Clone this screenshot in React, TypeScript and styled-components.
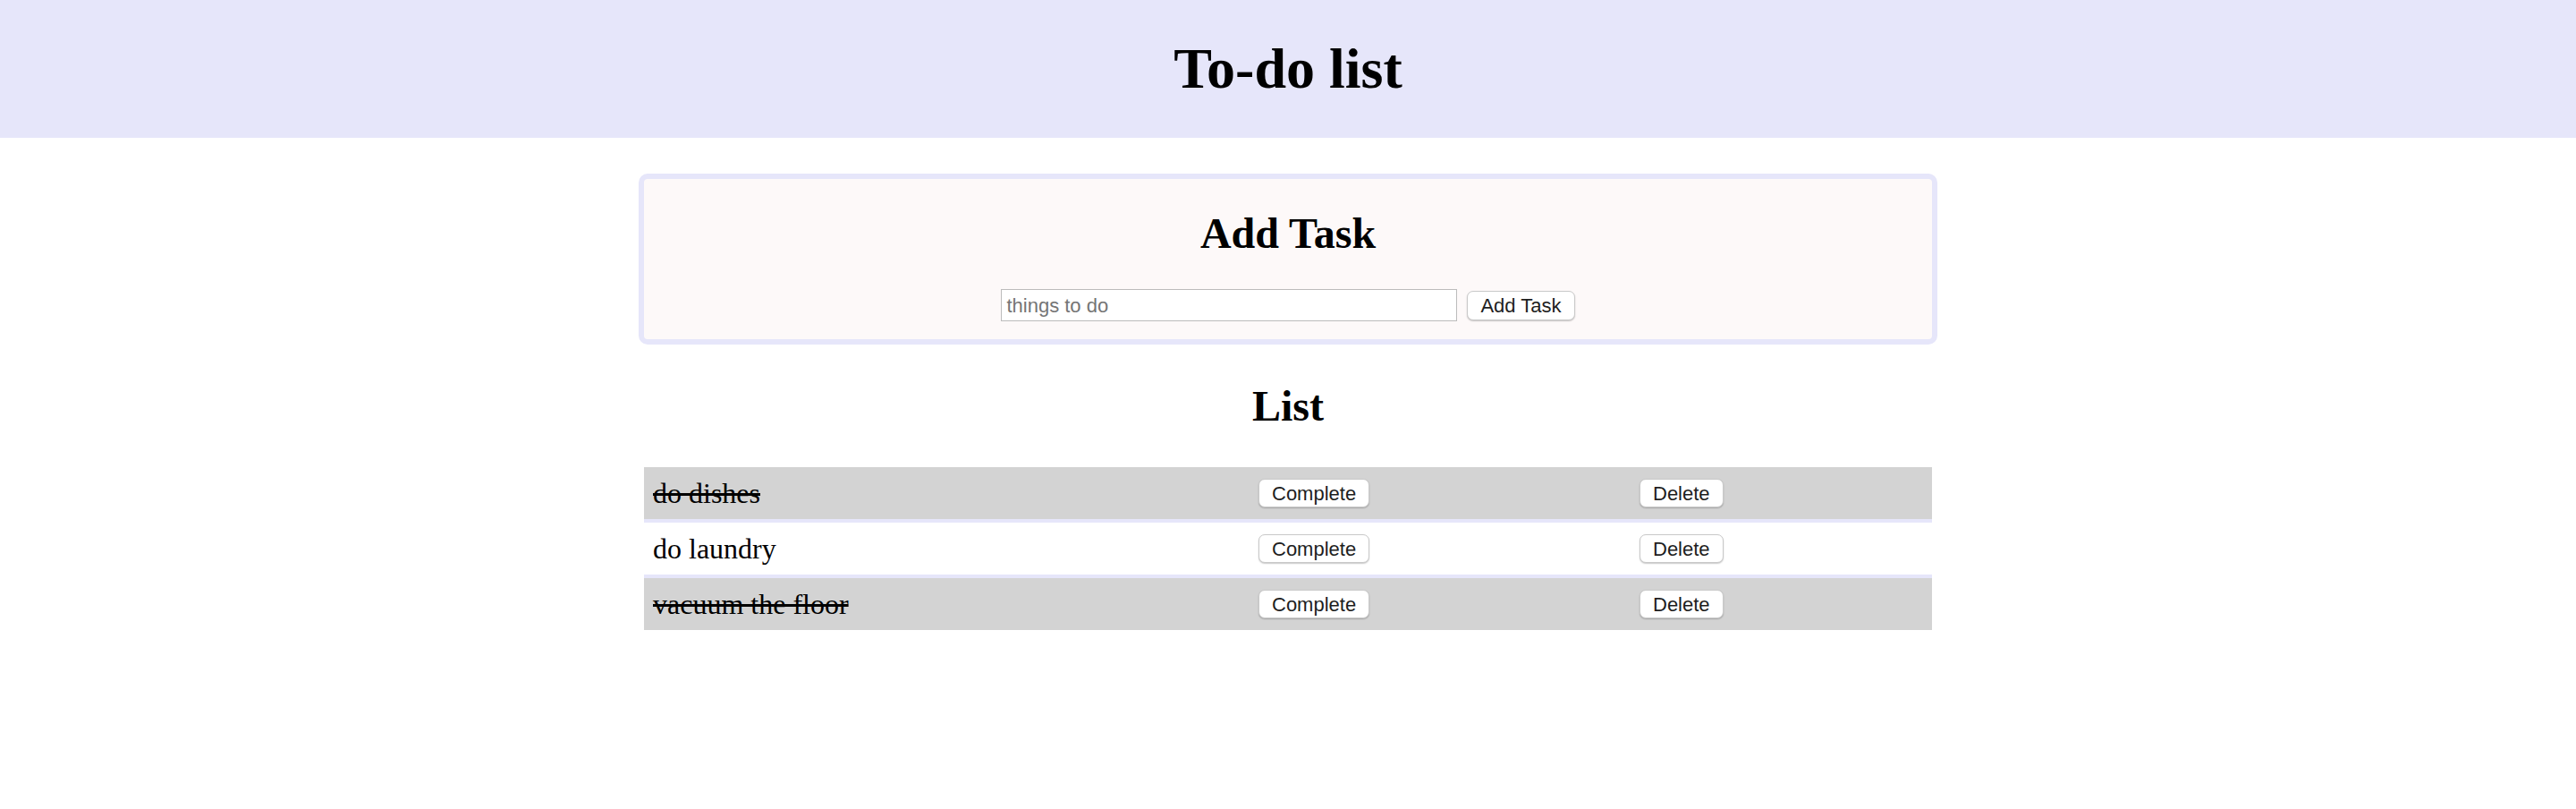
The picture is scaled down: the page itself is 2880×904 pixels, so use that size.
import React from "react";
import styled, { createGlobalStyle } from "styled-components";

const GlobalStyle = createGlobalStyle`
  html, body {
    margin: 0;
    padding: 0;
    background: #ffffff;
    font-family: "Liberation Serif", "Times New Roman", serif;
    color: #000;
  }
`;

const Header = styled.header`
  height: 154px;
  background: #e6e6fa;
  display: flex;
  align-items: center;
  justify-content: center;
`;

const Title = styled.h1`
  margin: 0;
  font-size: 64px;
  line-height: 74px;
  font-weight: 700;
`;

const Main = styled.main`
  display: flex;
  flex-direction: column;
  align-items: center;
  padding-top: 40px;
`;

const AddBox = styled.section`
  box-sizing: content-box;
  width: 1440px;
  border: 6px solid #e6e6fa;
  border-radius: 10px;
  background: #fdf9f9;
  display: flex;
  flex-direction: column;
  align-items: center;
  padding: 33px 0 20px;
`;

const SectionTitle = styled.h2<{ $space?: number }>`
  margin: ${(p) => (p.$space ? `${p.$space}px 0` : "0")};
  font-size: 48px;
  line-height: 55px;
  font-weight: 700;
`;

const Form = styled.form`
  display: flex;
  align-items: center;
  gap: 11px;
  margin-top: 35px;
`;

const TaskInput = styled.input`
  box-sizing: border-box;
  width: 510px;
  height: 36px;
  border: 1px solid #bcbcbc;
  border-radius: 0;
  padding: 2px 5px 0;
  background: #fff;
  font-family: "Liberation Sans", Arial, sans-serif;
  font-size: 22px;
  color: #000;
  outline: none;
  &::placeholder {
    color: #757575;
  }
`;

const Button = styled.button<{ $h?: number }>`
  box-sizing: border-box;
  height: ${(p) => p.$h ?? 32}px;
  padding: 2px 14px 0;
  border: 1px solid #c9c9c9;
  border-radius: 7px;
  background: #ffffff;
  box-shadow: 0 1px 1.5px rgba(0, 0, 0, 0.22);
  font-family: "Liberation Sans", Arial, sans-serif;
  font-size: 22px;
  color: #1e1e1e;
  cursor: pointer;
`;

const TaskList = styled.div`
  width: 1440px;
  display: flex;
  flex-direction: column;
`;

const TaskRow = styled.div<{ $done: boolean }>`
  display: grid;
  grid-template-columns: 677px 426px 1fr;
  height: 58px;
  background: ${(p) => (p.$done ? "#d3d3d3" : "#ffffff")};
  & + & {
    border-top: 4px solid #e6e6fa;
  }
`;

const Cell = styled.div`
  display: flex;
  align-items: center;
  padding: 0 10px;
`;

const TaskText = styled.span<{ $done: boolean }>`
  font-size: 32px;
  line-height: 37px;
  text-decoration: ${(p) => (p.$done ? "line-through" : "none")};
`;

const tasks = [
  { id: 1, text: "do dishes", done: true },
  { id: 2, text: "do laundry", done: false },
  { id: 3, text: "vacuum the floor", done: true },
];

export default function App() {
  return (
    <>
      <GlobalStyle />
      <Header>
        <Title>To-do list</Title>
      </Header>
      <Main>
        <AddBox>
          <SectionTitle>Add Task</SectionTitle>
          <Form onSubmit={(e) => e.preventDefault()}>
            <TaskInput placeholder="things to do" />
            <Button $h={33} type="submit">
              Add Task
            </Button>
          </Form>
        </AddBox>
        <SectionTitle $space={41}>List</SectionTitle>
        <TaskList>
          {tasks.map((t) => (
            <TaskRow key={t.id} $done={t.done}>
              <Cell>
                <TaskText $done={t.done}>{t.text}</TaskText>
              </Cell>
              <Cell>
                <Button type="button">Complete</Button>
              </Cell>
              <Cell>
                <Button type="button">Delete</Button>
              </Cell>
            </TaskRow>
          ))}
        </TaskList>
      </Main>
    </>
  );
}
